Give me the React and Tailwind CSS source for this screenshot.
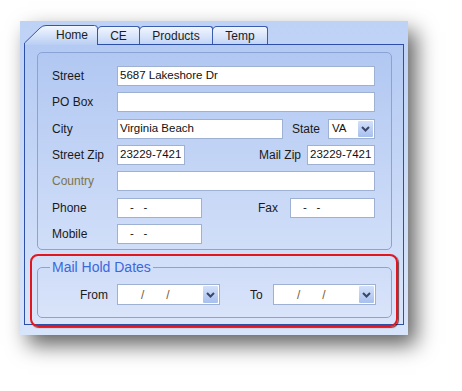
import React from "react";

const F = { fontFamily: '"Liberation Sans", Arial, sans-serif' };

function Chevron() {
  return (
    <svg width="9" height="6" viewBox="0 0 9 6">
      <path d="M1 1 L4.5 4.5 L8 1" fill="none" stroke="#3a4668" strokeWidth="2" />
    </svg>
  );
}

function DropBtn() {
  return (
    <div className="w-[15px] self-stretch my-[1px] mr-[1px] flex items-center justify-center bg-gradient-to-b from-[#d3e0fa] to-[#a8c0ee] rounded-[1px]">
      <Chevron />
    </div>
  );
}

function Input({ w, value, cls = "" }) {
  return (
    <div
      className={`h-[20px] bg-white border border-[#9fb1d2] flex items-center pl-[2px] text-[11.5px] text-[#111] whitespace-pre overflow-hidden ${w} ${cls}`}
    >
      {value}
    </div>
  );
}

function Label({ children, w = "w-[65px]", color = "text-[#1a1a1a]" }) {
  return <div className={`${w} ${color} text-[12px] shrink-0`}>{children}</div>;
}

function DatePicker() {
  return (
    <div className="w-[103px] h-[21px] bg-white border border-[#9fb1d2] flex items-stretch">
      <div className="flex-1 flex items-center text-[12px] text-[#7a5a34]">
        <span className="ml-[23px]">/</span>
        <span className="ml-[22px]">/</span>
      </div>
      <DropBtn />
    </div>
  );
}

function Tab({ w, children }) {
  return (
    <div
      className={`${w} h-[18px] border border-b-0 border-[#3a5cae] rounded-tl-[5px] rounded-tr-[3px] bg-gradient-to-b from-[#f2f6fe] to-[#c3d5f6] flex items-center justify-center text-[12px] text-[#1c1c24] -ml-[1px]`}
    >
      {children}
    </div>
  );
}

export default function App() {
  return (
    <div className="w-[462px] h-[391px] bg-white pt-[21px] pl-[20px] overflow-hidden" style={F}>
      <div className="relative w-[388px] h-[314px] bg-gradient-to-b from-[#bed2f6] to-[#d8e4fa] shadow-[8px_10px_20px_rgba(0,0,0,0.62)] pt-[4px] pl-[4px]">
        <div className="w-[380px] flex flex-col">
          {/* tab strip */}
          <div className="flex items-end h-[19px] relative z-10">
            <div className="relative w-[74px] h-[20px] -mb-[1px] flex items-center justify-center">
              <svg className="absolute inset-0" width="74" height="20" viewBox="0 0 74 20">
                <defs>
                  <linearGradient id="hg" x1="0" y1="0" x2="0" y2="1">
                    <stop offset="0" stopColor="#f4f8ff" />
                    <stop offset="1" stopColor="#b9cef4" />
                  </linearGradient>
                </defs>
                <path
                  d="M0.5 20 L0.5 18 L16 3 Q18.5 0.5 22 0.5 L70.5 0.5 Q73.5 0.5 73.5 3.5 L73.5 20"
                  fill="url(#hg)"
                  stroke="#3556a8"
                  strokeWidth="1"
                />
              </svg>
              <span className="relative text-[12px] text-[#1c1c24] ml-[22px] -mt-[1px]">Home</span>
            </div>
            <Tab w="w-[43px]">CE</Tab>
            <Tab w="w-[74px]">Products</Tab>
            <Tab w="w-[56px]">Temp</Tab>
          </div>
          {/* panel */}
          <div className="h-[281px] border border-[#2d4fa5] bg-gradient-to-b from-[#b4caf3] to-[#dae5fa] pt-[7px] pl-[12px] pr-[11px] pb-[6px] flex flex-col">
            <div className="h-[199px] border border-[#8aa3d6] rounded-[5px] bg-gradient-to-b from-[#b2c8f2] to-[#d0def8] pt-[13px] pl-[14px] pr-[16px] flex flex-col gap-[6.33px]">
              <div className="flex items-center h-[20px]">
                <Label>Street</Label>
                <Input w="flex-1" value="5687 Lakeshore Dr" />
              </div>
              <div className="flex items-center h-[20px]">
                <Label>PO Box</Label>
                <Input w="flex-1" value="" />
              </div>
              <div className="flex items-center h-[20px]">
                <Label>City</Label>
                <Input w="w-[166px]" value="Virginia Beach" />
                <div className="ml-[9px] w-[36px] text-[12px] text-[#1a1a1a]">State</div>
                <div className="flex-1 h-[20px] bg-white border border-[#9fb1d2] flex items-stretch">
                  <div className="flex-1 flex items-center pl-[3px] text-[11.5px] text-[#111]">VA</div>
                  <DropBtn />
                </div>
              </div>
              <div className="flex items-center h-[20px]">
                <Label>Street Zip</Label>
                <Input w="w-[68px]" value="23229-7421" />
                <div className="flex-1 text-right pr-[6px] text-[12px] text-[#1a1a1a]">Mail Zip</div>
                <Input w="w-[68px]" value="23229-7421" />
              </div>
              <div className="flex items-center h-[20px]">
                <Label color="text-[#7b7450]">Country</Label>
                <Input w="flex-1" value="" />
              </div>
              <div className="flex items-center h-[20px]">
                <Label>Phone</Label>
                <Input w="w-[85px]" value="-   -" cls="pl-[12px]" />
                <div className="ml-[56px] flex-1 text-[12px] text-[#1a1a1a]">Fax</div>
                <Input w="w-[85px]" value="-   -" cls="pl-[12px]" />
              </div>
              <div className="flex items-center h-[20px]">
                <Label>Mobile</Label>
                <Input w="w-[85px]" value="-   -" cls="pl-[12px]" />
              </div>
            </div>
            <fieldset className="mt-[9px] border border-[#8aa3d6] rounded-[5px] bg-gradient-to-b from-[#d0ddf8] to-[#d9e4fa] pt-[9px] pb-[12px]">
              <legend className="ml-[12px] px-[2px] text-[14px] leading-[16px] text-[#3b68dc]">Mail Hold Dates</legend>
              <div className="flex items-center h-[21px] pl-[42px]">
                <div className="w-[28px] text-[12px] text-[#1a1a1a]">From</div>
                <div className="ml-[9px]">
                  <DatePicker />
                </div>
                <div className="ml-[30px] w-[14px] text-[12px] text-[#1a1a1a]">To</div>
                <div className="ml-[9px]">
                  <DatePicker />
                </div>
              </div>
            </fieldset>
          </div>
        </div>
        {/* red annotation */}
        <div className="absolute left-[10px] top-[233px] w-[368px] h-[73px] border-2 border-[#e2161f] rounded-[8px] shadow-[1px_1px_1px_rgba(60,0,0,0.7)] pointer-events-none" />
      </div>
    </div>
  );
}
